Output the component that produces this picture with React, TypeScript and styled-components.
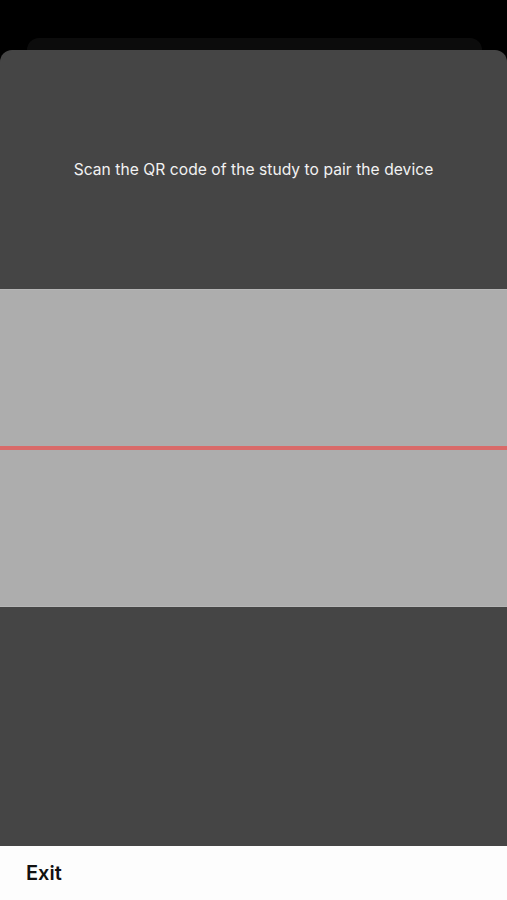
import React from "react";
import styled, { createGlobalStyle } from "styled-components";

const Global = createGlobalStyle`
  html, body { margin: 0; padding: 0; background: #000; }
  body { font-family: Inter, "Noto Sans", sans-serif; }
`;

const Page = styled.div`
  height: 900px;
  background: #000;
  display: flex;
  flex-direction: column;
  padding-top: 38px;
  box-sizing: border-box;
`;

const Peek = styled.div`
  height: 12px;
  margin: 0 25px 0 27px;
  background: #0c0c0c;
  border-radius: 12px 12px 0 0;
`;

const Sheet = styled.div`
  flex: 1;
  display: flex;
  flex-direction: column;
  background: #454545;
  border-radius: 12px 12px 0 0;
  overflow: hidden;
`;

const Header = styled.div`
  height: 239px;
  box-sizing: border-box;
  padding-top: 108px;
  display: flex;
  justify-content: center;
`;

const Prompt = styled.p`
  margin: 0;
  color: #f2f2f2;
  font-size: 15.6px;
  line-height: 24px;
  letter-spacing: 0.05px;
`;

const Scanner = styled.div`
  height: 318px;
  background: #adadad;
  border-top: 1px solid #b6b6b6;
  border-bottom: 1px solid #b6b6b6;
  box-sizing: border-box;
  display: flex;
  flex-direction: column;
  justify-content: center;
`;

const Laser = styled.div`
  height: 4px;
  background: #d96a69;
`;

const Filler = styled.div`
  flex: 1;
`;

const Footer = styled.div`
  height: 54px;
  background: #fdfdfd;
  display: flex;
  align-items: center;
  padding-left: 26px;
`;

const ExitButton = styled.button`
  border: none;
  background: none;
  padding: 0;
  font-family: Inter, "Noto Sans", sans-serif;
  font-size: 20px;
  font-weight: 600;
  color: #111;
  margin-top: -1px;
`;

export default function App() {
  return (
    <>
      <Global />
      <Page>
        <Peek />
        <Sheet>
          <Header>
            <Prompt>Scan the QR code of the study to pair the device</Prompt>
          </Header>
          <Scanner>
            <Laser />
          </Scanner>
          <Filler />
          <Footer>
            <ExitButton>Exit</ExitButton>
          </Footer>
        </Sheet>
      </Page>
    </>
  );
}
